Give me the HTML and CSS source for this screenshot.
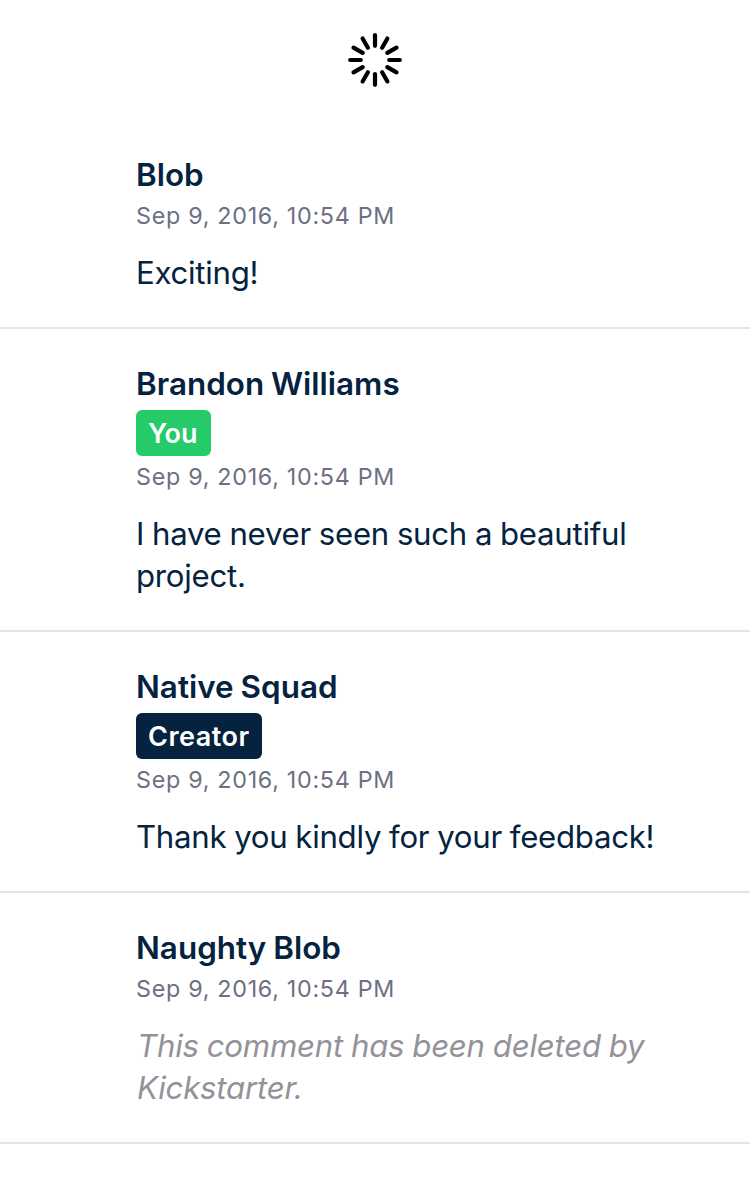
FILE: index.html
```html
<!DOCTYPE html>
<html lang="en">
<head>
<meta charset="utf-8">
<title>Comments</title>
<link rel="stylesheet" href="styles.css">
</head>
<body>
<main class="comments">
  <div class="loader">
    <svg class="spinner" width="54" height="54" viewBox="-27 -27 54 54" role="img" aria-label="Loading">
      <defs><line id="spoke" x1="0" y1="-14.2" x2="0" y2="-24.8"/></defs>
      <g stroke="#000" stroke-width="4.2" stroke-linecap="round">
        <use href="#spoke"/><use href="#spoke" transform="rotate(30)"/><use href="#spoke" transform="rotate(60)"/><use href="#spoke" transform="rotate(90)"/><use href="#spoke" transform="rotate(120)"/><use href="#spoke" transform="rotate(150)"/><use href="#spoke" transform="rotate(180)"/><use href="#spoke" transform="rotate(210)"/><use href="#spoke" transform="rotate(240)"/><use href="#spoke" transform="rotate(270)"/><use href="#spoke" transform="rotate(300)"/><use href="#spoke" transform="rotate(330)"/>
      </g>
    </svg>
  </div>
  <article class="comment">
    <h2 class="author">Blob</h2>
    <time class="date">Sep 9, 2016, 10:54 PM</time>
    <p class="body">Exciting!</p>
  </article>
  <article class="comment">
    <h2 class="author">Brandon Williams</h2>
    <span class="badge badge-you">You</span>
    <time class="date">Sep 9, 2016, 10:54 PM</time>
    <p class="body">I have never seen such a beautiful project.</p>
  </article>
  <article class="comment">
    <h2 class="author">Native Squad</h2>
    <span class="badge badge-creator">Creator</span>
    <time class="date">Sep 9, 2016, 10:54 PM</time>
    <p class="body">Thank you kindly for your feedback!</p>
  </article>
  <article class="comment">
    <h2 class="author">Naughty Blob</h2>
    <time class="date">Sep 9, 2016, 10:54 PM</time>
    <p class="body deleted">This comment has been deleted by Kickstarter.</p>
  </article>
</main>
</body>
</html>
```
FILE: styles.css
```css
body { margin: 0; background: #fff; color: #05233f; font-family: Inter, "Liberation Sans", sans-serif; }
.loader { display: flex; justify-content: center; height: 120px; padding-top: 33px; box-sizing: border-box; }
.spinner { display: block; }
.comment { display: flex; flex-direction: column; align-items: flex-start; padding: 36px 48px 33px 136px; border-bottom: 2px solid #e5e5e5; }
.author { margin: 0; font-size: 31.4px; line-height: 38px; font-weight: 600; letter-spacing: 0.02px; word-spacing: -1px; }
.date { margin-top: 6px; font-size: 23.3px; line-height: 32px; color: #6c7083; letter-spacing: 0.7px; }
.body { margin: 20px 0 0; font-size: 31.2px; line-height: 42px; letter-spacing: -0.27px; word-spacing: -0.6px; }
.badge { box-sizing: border-box; height: 46px; margin-top: 7px; padding: 0 12px; border-radius: 6px; color: #fff; font-size: 27px; line-height: 47px; font-weight: 600; }
.badge + .date { margin-top: 5px; }
.badge-you { width: 75px; background: #25cb68; }
.badge-creator { width: 126px; background: #05233f; letter-spacing: 0.5px; }
.deleted { padding-left: 1px; color: #949299; font-style: italic; letter-spacing: -0.22px; }
```
